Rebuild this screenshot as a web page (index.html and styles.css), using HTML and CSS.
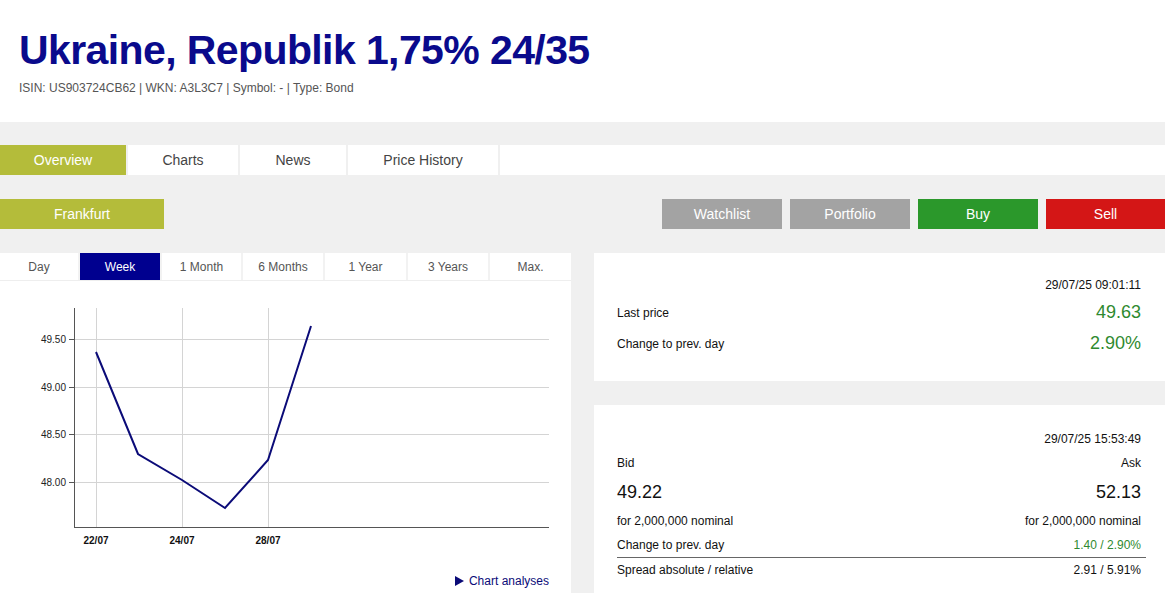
FILE: index.html
```html
<!DOCTYPE html>
<html lang="en">
<head>
<meta charset="utf-8">
<title>Ukraine, Republik 1,75% 24/35</title>
<link rel="stylesheet" href="styles.css">
</head>
<body>
<header class="head">
  <h1 class="title">Ukraine, Republik 1,75% 24/35</h1>
  <p class="meta">ISIN: US903724CB62 | WKN: A3L3C7 | Symbol: - | Type: Bond</p>
</header>

<nav class="tabs">
  <a class="tab tab-active tab-overview">Overview</a>
  <a class="tab tab-charts">Charts</a>
  <a class="tab tab-news">News</a>
  <a class="tab tab-history">Price History</a>
  <span class="tab-fill"></span>
</nav>

<div class="actions">
  <button class="btn btn-exchange">Frankfurt</button>
  <div class="actions-right">
    <button class="btn btn-gray">Watchlist</button>
    <button class="btn btn-gray">Portfolio</button>
    <button class="btn btn-buy">Buy</button>
    <button class="btn btn-sell">Sell</button>
  </div>
</div>

<main class="content">
  <section class="chart-panel">
    <div class="ranges">
      <span class="range">Day</span>
      <span class="range range-active">Week</span>
      <span class="range">1 Month</span>
      <span class="range">6 Months</span>
      <span class="range">1 Year</span>
      <span class="range">3 Years</span>
      <span class="range">Max.</span>
    </div>
    <svg class="chart" width="571" height="292" viewBox="0 0 571 292">
      <g stroke="#d4d4d4" stroke-width="1">
        <line x1="96.5" y1="27" x2="96.5" y2="246"/>
        <line x1="182.5" y1="27" x2="182.5" y2="246"/>
        <line x1="268.5" y1="27" x2="268.5" y2="246"/>
        <line x1="74" y1="58.5" x2="549" y2="58.5"/>
        <line x1="74" y1="106.5" x2="549" y2="106.5"/>
        <line x1="74" y1="153.5" x2="549" y2="153.5"/>
        <line x1="74" y1="201.5" x2="549" y2="201.5"/>
      </g>
      <g stroke="#555" stroke-width="1">
        <line x1="74.5" y1="27" x2="74.5" y2="246.5"/>
        <line x1="74" y1="246.5" x2="549" y2="246.5"/>
        <line x1="69" y1="58.5" x2="74" y2="58.5"/>
        <line x1="69" y1="106.5" x2="74" y2="106.5"/>
        <line x1="69" y1="153.5" x2="74" y2="153.5"/>
        <line x1="69" y1="201.5" x2="74" y2="201.5"/>
      </g>
      <g class="ylab" text-anchor="end">
        <text x="66" y="62">49.50</text>
        <text x="66" y="110">49.00</text>
        <text x="66" y="157">48.50</text>
        <text x="66" y="205">48.00</text>
      </g>
      <g class="xlab" text-anchor="middle">
        <text x="96" y="263">22/07</text>
        <text x="182" y="263">24/07</text>
        <text x="268" y="263">28/07</text>
      </g>
      <polyline fill="none" stroke="#0b0b78" stroke-width="2" stroke-linejoin="miter"
        points="96,71 138,173 182,199 225,227 268,179 311,45"/>
    </svg>
    <div class="chart-foot">
      <a class="chart-link"><svg class="tri" width="9" height="10" viewBox="0 0 9 10"><path d="M0 0 L9 5 L0 10 Z" fill="#0b0b78"/></svg>Chart analyses</a>
    </div>
  </section>

  <div class="side">
    <section class="card card-last">
      <div class="stamp">29/07/25 09:01:11</div>
      <div class="row row-big row-first">
        <span>Last price</span>
        <span class="val-green val-lg">49.63</span>
      </div>
      <div class="row row-big">
        <span>Change to prev. day</span>
        <span class="val-green val-lg">2.90%</span>
      </div>
    </section>

    <section class="card card-quote">
      <div class="qrow qrow-stamp"><span></span><span>29/07/25 15:53:49</span></div>
      <div class="qrow"><span>Bid</span><span>Ask</span></div>
      <div class="qrow qrow-price"><span>49.22</span><span>52.13</span></div>
      <div class="qrow"><span>for 2,000,000 nominal</span><span>for 2,000,000 nominal</span></div>
      <div class="qrow qrow-line"><span>Change to prev. day</span><span class="val-green">1.40 / 2.90%</span></div>
      <div class="qrow"><span>Spread absolute / relative</span><span>2.91 / 5.91%</span></div>
    </section>
  </div>
</main>
</body>
</html>
```

FILE: styles.css
```css
* { box-sizing: border-box; }

html, body {
  margin: 0;
  padding: 0;
}

body {
  background: #f0f0f0;
  font-family: "Liberation Sans", Arial, sans-serif;
  color: #111;
  overflow: hidden;
}

.head {
  background: #fff;
  height: 122px;
  padding: 26px 0 0 19px;
}

.title {
  margin: 0;
  font-size: 41px;
  line-height: 48px;
  font-weight: bold;
  color: #0a0a8c;
  letter-spacing: -0.6px;
}

.meta {
  margin: 7px 0 0;
  font-size: 12px;
  line-height: 14px;
  color: #555;
}

.tabs {
  display: flex;
  gap: 2px;
  margin-top: 23px;
  height: 30px;
}

.tab {
  display: flex;
  align-items: center;
  justify-content: center;
  background: #fff;
  font-size: 14px;
  color: #444;
}

.tab-overview { width: 126px; }
.tab-charts { width: 110px; }
.tab-news { width: 106px; }
.tab-history { width: 150px; }

.tab-active {
  background: #b4bc3a;
  color: #fff;
}

.tab-fill {
  flex: 1;
  background: #fff;
}

.actions {
  display: flex;
  justify-content: space-between;
  margin-top: 24px;
  height: 30px;
}

.actions-right {
  display: flex;
  gap: 8px;
}

.btn {
  border: 0;
  margin: 0;
  padding: 0;
  height: 30px;
  width: 120px;
  font-family: inherit;
  font-size: 14px;
  color: #fff;
}

.btn-exchange { width: 164px; background: #b4bc3a; }
.btn-gray { background: #a3a3a3; }
.btn-buy { background: #2b982b; }
.btn-sell { background: #d41616; width: 119px; }

.content {
  display: flex;
  gap: 23px;
  margin-top: 24px;
}

.chart-panel {
  width: 571px;
  flex: none;
  background: #fff;
  height: 360px;
}

.ranges {
  display: grid;
  grid-template-columns: 78px 80px 79px 80px 81px 80px 1fr;
  gap: 2px;
  background: #f2f2f2;
  height: 28px;
  border-bottom: 1px solid #eee;
}

.range {
  display: flex;
  align-items: center;
  justify-content: center;
  background: #fff;
  font-size: 12px;
  color: #555;
}

.range-active {
  background: #00008f;
  color: #fff;
}

.chart {
  display: block;
}

.ylab text {
  font-size: 10px;
  fill: #222;
  font-family: "Liberation Sans", Arial, sans-serif;
}

.xlab text {
  font-size: 10px;
  font-weight: bold;
  fill: #111;
  font-family: "Liberation Sans", Arial, sans-serif;
}

.chart-foot {
  display: flex;
  justify-content: flex-end;
  padding: 1px 22px 0 0;
}

.chart-link {
  display: flex;
  align-items: center;
  gap: 5px;
  font-size: 12px;
  line-height: 14px;
  color: #0b0b78;
}

.side {
  flex: 1;
  display: flex;
  flex-direction: column;
  gap: 24px;
}

.card {
  background: #fff;
  padding: 0 24px 0 23px;
}

.card-last {
  height: 128px;
  padding-top: 25px;
}

.stamp {
  text-align: right;
  font-size: 12px;
  line-height: 14px;
  color: #111;
}

.row {
  display: flex;
  justify-content: space-between;
  align-items: center;
  font-size: 12px;
}

.row-big {
  height: 31px;
}

.row-first {
  margin-top: 5px;
}

.val-green { color: #2f8a2f; }

.val-lg {
  font-size: 18px;
}

.card-quote {
  height: 200px;
  padding: 22px 19px 0 23px;
}

.qrow {
  display: flex;
  justify-content: space-between;
  align-items: center;
  height: 24px;
  font-size: 12px;
  padding-right: 5px;
}

.qrow-price {
  height: 34px;
  font-size: 18px;
}

.qrow-line {
  border-bottom: 1px solid #666;
  height: 25px;
}
```
